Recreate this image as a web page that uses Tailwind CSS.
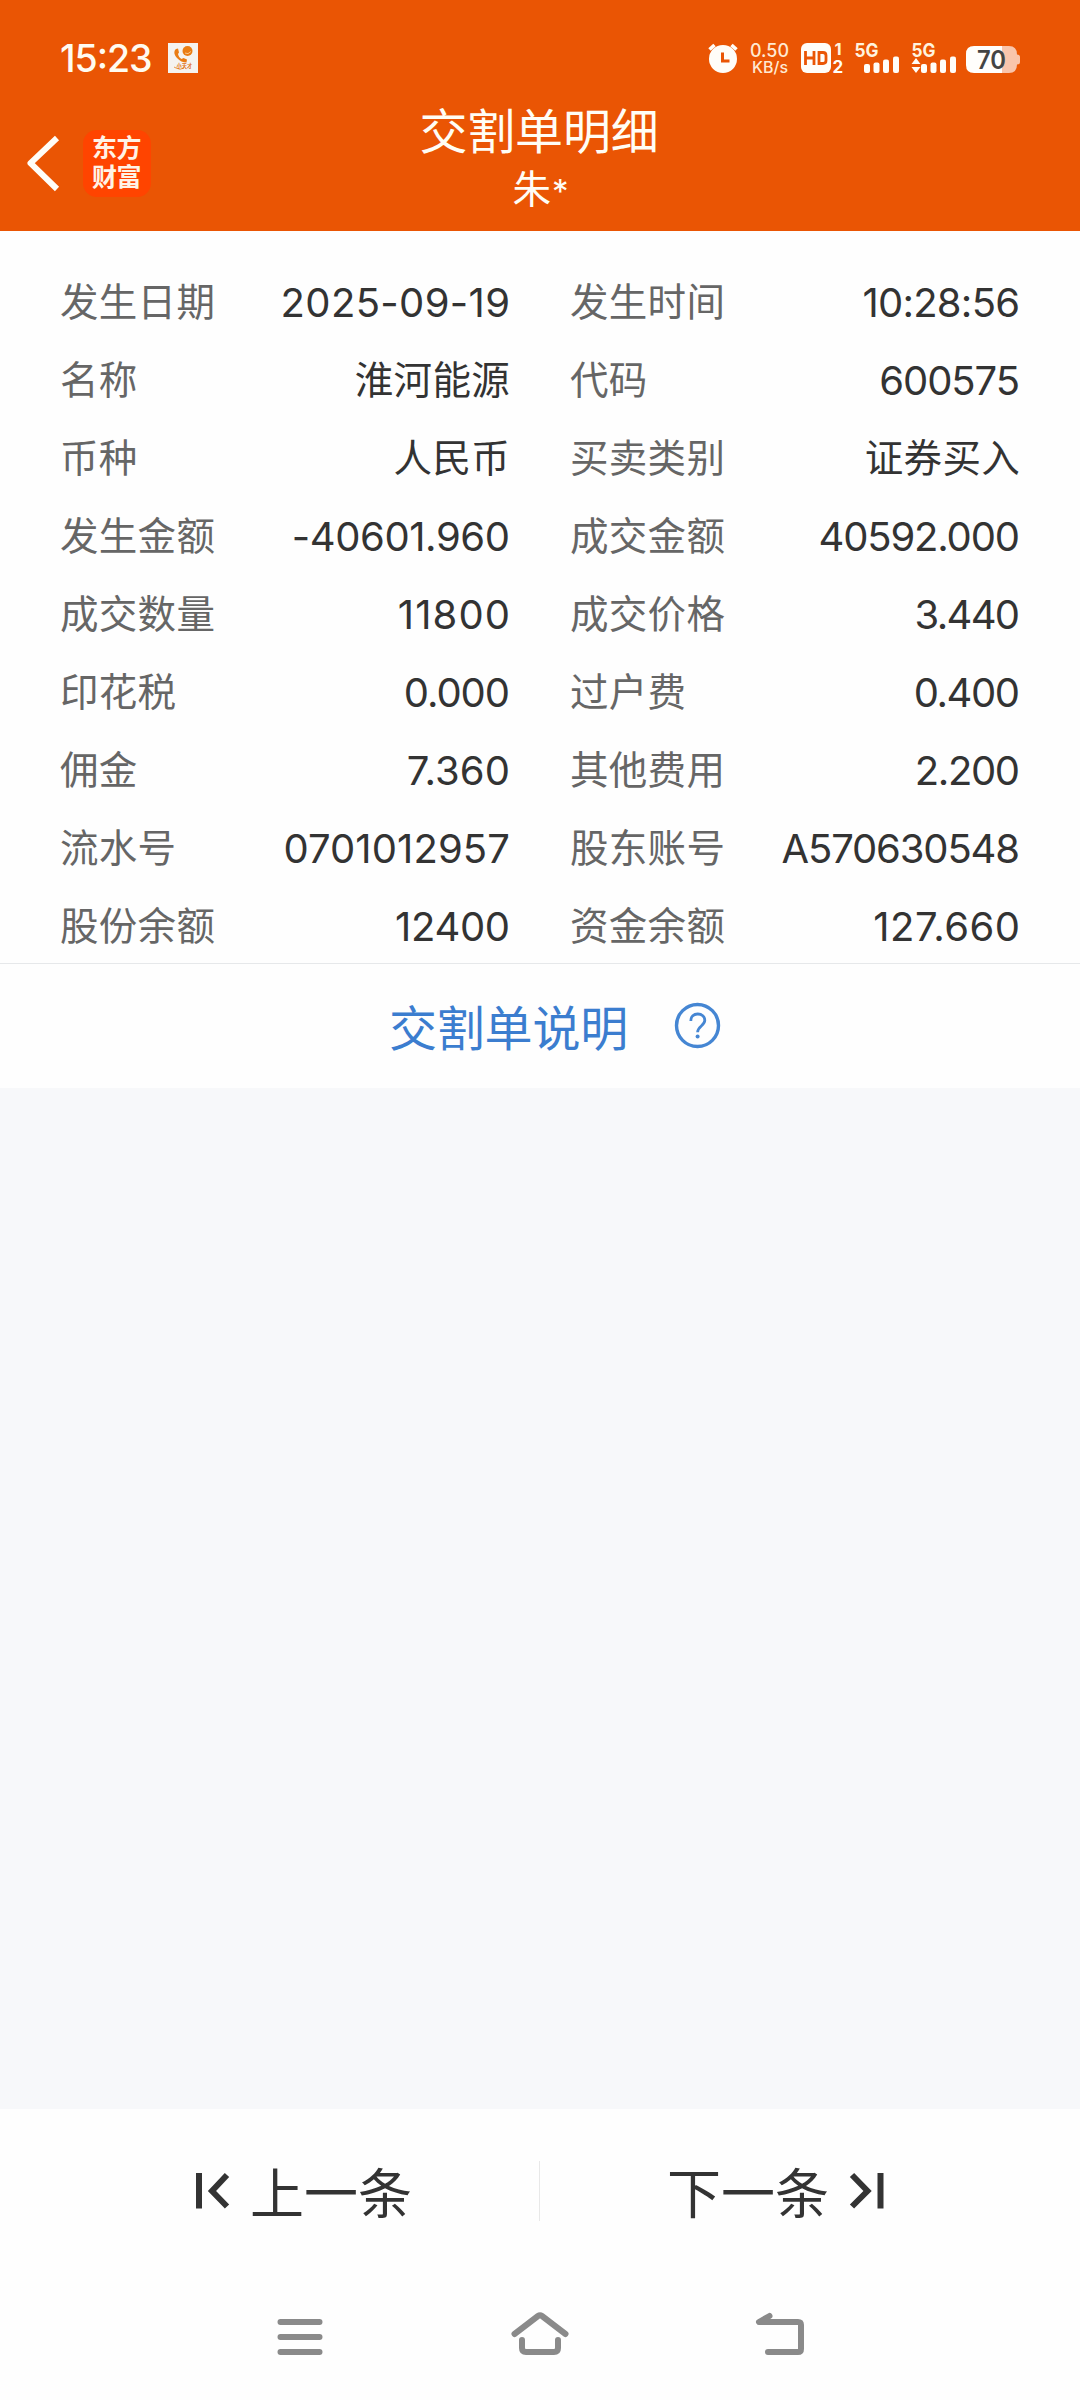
<!DOCTYPE html>
<html lang="zh-CN">
<head>
<meta charset="utf-8">
<title>交割单明细</title>
<script src="https://cdn.jsdelivr.net/npm/@tailwindcss/browser@4"></script>
</head>
<body class="w-[1080px] h-[2400px] bg-[#fefefe] font-['Inter','Noto_Sans_CJK_SC',sans-serif] flex flex-col overflow-hidden">

<header class="h-[231px] shrink-0 bg-[#ea5504] text-[#fffdf5] flex flex-col">
  <!-- status bar -->
  <div class="h-[90px] flex justify-between">
    <svg class="w-[300px] h-[90px]" viewBox="0 0 300 90">
      <text x="60" y="71.500" font-size="37.500" font-weight="450" fill="#fffbf0" textLength="92.500" lengthAdjust="spacing">15:23</text>
      <rect x="168" y="43" width="30" height="30" fill="#f5f3f0"/>
      <path d="M176 49c-2.500 2-2 6 1 9s6 4.500 9.500 4.500l.5-3-3.500-1.500-2 1c-2-1-3-3-3.500-5l1-1.500-1-4z" fill="#ea7d14"/>
      <circle cx="187.500" cy="51" r="5" fill="#ea7d14"/>
      <path d="M185 53q3 2 6-1.500" stroke="#f9c68a" fill="none"/>
      <path d="M174 67l2 1q4 2.500 8 0" stroke="#ea7d14" fill="none" stroke-width=".8"/>
      <text x="176.500" y="68" font-size="5.200" font-weight="700" fill="#e07010">小天才</text>
    </svg>
    <svg class="w-[390px] h-[90px]" viewBox="690 0 390 90">
      <circle cx="723" cy="59" r="14" fill="#fffdf8"/>
      <path d="M709.500 49.500l5-4.500M736.500 49.500l-5-4.500" stroke="#fffdf8" stroke-width="3.600"/>
      <path d="M722.500 52.500v8.500h7" stroke="#ea5504" stroke-width="3" fill="none"/>
      <text x="750" y="57" font-size="18.500" font-weight="500" fill="#ffe9d2" textLength="39" lengthAdjust="spacingAndGlyphs">0.50</text>
      <text x="752" y="72.500" font-size="15.500" font-weight="500" fill="#ffe9d2" textLength="36" lengthAdjust="spacingAndGlyphs">KB/s</text>
      <rect x="801" y="43" width="30" height="30" rx="6" fill="#fffdf8"/>
      <path d="M805.500 51v14M814 51v14M805.500 58h8.500M819 52.500h4q3 0 3 3v5q0 3-3 3h-4z" stroke="#ea5504" stroke-width="2.800" fill="none"/>
      <text x="834.500" y="55" font-size="16.500" font-weight="700" fill="#fff3df">1</text>
      <text x="832.500" y="72.500" font-size="17" font-weight="700" fill="#fffdf8">2</text>
      <text x="854.500" y="57" font-size="19" font-weight="700" fill="#fff3df" textLength="24" lengthAdjust="spacingAndGlyphs">5G</text>
      <g fill="#fffdf8">
        <rect x="864" y="64" width="6" height="9" rx="2"/><rect x="873.500" y="62.500" width="6" height="10.500" rx="2"/><rect x="883" y="59.500" width="6" height="13.500" rx="2"/><rect x="893" y="56.500" width="6" height="16.500" rx="2"/>
        <rect x="921" y="64" width="6" height="9" rx="2"/><rect x="930.500" y="62.500" width="6" height="10.500" rx="2"/><rect x="940" y="59.500" width="6" height="13.500" rx="2"/><rect x="950" y="56.500" width="6" height="16.500" rx="2"/>
        <path d="M916 58l4.500 6h-9zM916 73l4.500-6h-9z"/>
      </g>
      <text x="911.500" y="57" font-size="19" font-weight="700" fill="#fff3df" textLength="24" lengthAdjust="spacingAndGlyphs">5G</text>
      <path d="M1002 46h7q8 0 8 8.500 3 0 3 2.500v5q0 2.500-3 2.500 0 8.500-8 8.500h-7z" fill="#f9c5ac"/>
      <path d="M974 46h28v27h-28q-8 0-8-8v-11q0-8 8-8z" fill="#fffefc"/>
      <text x="977" y="69" font-size="25" font-weight="600" fill="#444" textLength="29" lengthAdjust="spacingAndGlyphs">70</text>
    </svg>
  </div>
  <!-- title bar -->
  <div class="h-[141px] grid grid-cols-[300px_1fr_300px]">
    <div class="flex items-start">
      <svg class="w-[83px] h-[141px]" viewBox="0 90 83 141"><path d="M57 138L30.500 163.200l26.500 25.800" stroke="#fffdf8" stroke-width="6" fill="none" stroke-linejoin="round"/></svg>
      <div class="mt-[40px] w-[68px] h-[67px] rounded-[14px] bg-[#ff4400] flex flex-col items-center justify-center text-[25px] leading-[29px] tracking-[-0.5px] pr-[1px] pb-[2px] font-bold text-[#fff3e6]"><span>东方</span><span>财富</span></div>
    </div>
    <div class="flex flex-col items-center">
      <h1 class="mt-[12px] pr-[2px] text-[48px] leading-[60px] tracking-[-0.2px]">交割单明细</h1>
      <p class="mt-[1px] text-[38.500px] leading-[52px] flex pl-[1px]">朱<span class="text-[33px] pt-[2px] pl-[1px]">*</span></p>
    </div>
  </div>
</header>

<main class="flex-1 flex flex-col bg-[#f7f8fa]">
  <section id="rows" class="h-[733px] bg-[#fefefe] border-b border-[#e6e8ea] pt-[32px] pl-[60px] pr-[60px] grid grid-cols-2 gap-x-[60px] auto-rows-[78px] text-[38.500px] text-[#333]"></section>
  <section class="h-[124px] bg-[#fefefe] flex justify-center items-start">
    <span class="mt-[35px] ml-[30px] text-[48px] leading-[60px] tracking-[-0.2px] text-[#3b7dcf]">交割单说明</span>
    <svg class="ml-[46px] mt-[38px] w-[47px] h-[47px]" viewBox="674 1002 47 47" fill="none" stroke="#4586d3"><circle cx="697.500" cy="1025.500" r="21" stroke-width="3.400"/><path d="M690.800 1021c0-4.500 3-7 7-7s7 2.700 7 6.300c0 5.500-7.200 6-7.200 12" stroke-width="2.800"/><circle cx="697.600" cy="1036.500" r="2" fill="#4586d3" stroke="none"/></svg>
  </section>
</main>

<footer class="h-[291px] shrink-0 bg-[#fefefe]">
  <div class="h-[163px] grid grid-cols-[539px_1px_540px] text-[54px] leading-[68px] text-[#333]">
    <div class="flex items-start pl-[194px]">
      <svg class="mt-[62px] w-[40px] h-[40px]" viewBox="194 2171 40 40" fill="none" stroke="#333"><path d="M199 2173v35.500" stroke-width="6"/><path d="M227 2175l-15 16 15 15.500" stroke-width="6"/></svg>
      <span class="ml-[16px] mt-[52px]">上一条</span>
    </div>
    <div class="mt-[52px] h-[60px] bg-[#e8e8e8]"></div>
    <div class="flex items-start pl-[127px]">
      <span class="mt-[52px]">下一条</span>
      <svg class="ml-[18px] mt-[62px] w-[40px] h-[40px]" viewBox="847 2171 40 40" fill="none" stroke="#333"><path d="M880.500 2173v35.500" stroke-width="6"/><path d="M852 2175l15.500 16-15.500 15.500" stroke-width="6"/></svg>
    </div>
  </div>
  <nav class="h-[128px] flex justify-center gap-[160px] pt-[25px]">
    <svg class="w-[80px] h-[80px]" viewBox="260 2297 80 80" stroke="#8a8a8a" stroke-width="6" stroke-linecap="round"><path d="M280.500 2322h39M280.500 2337h39M280.500 2352h39"/></svg>
    <svg class="w-[80px] h-[80px]" viewBox="500 2297 80 80" fill="none" stroke="#8a8a8a" stroke-width="6" stroke-linecap="round" stroke-linejoin="round"><path d="M514.500 2334l23.500-18q2-1.500 4 0l23.500 18M522 2340v8q0 4 4 4h28q4 0 4-4v-8"/></svg>
    <svg class="w-[80px] h-[80px]" viewBox="740 2297 80 80" fill="none" stroke="#8a8a8a" stroke-width="6" stroke-linecap="round" stroke-linejoin="round"><path d="M769.500 2316l-10.500 6h39q3 0 3 3v24q0 3-3 3h-30"/></svg>
  </nav>
</footer>

<script>
// label, value, tracking classes
const data = [
  ['发生日期', '2025-09-19', 'tracking-[0.35px] mr-[-0.35px]'], ['发生时间', '10:28:56', 'tracking-[-0.75px] mr-[0.75px]'],
  ['名称', '淮河能源', 'tracking-[0.3px]'], ['代码', '600575', 'tracking-[-1.1px] mr-[1.1px]'],
  ['币种', '人民币', 'tracking-[0.3px]'], ['买卖类别', '证券买入', 'tracking-[0.3px]'],
  ['发生金额', '-40601.960', 'tracking-[-0.4px] mr-[0.4px]'], ['成交金额', '40592.000', 'tracking-[-1.16px] mr-[1.16px]'],
  ['成交数量', '11800', 'tracking-[1.1px] mr-[-1.1px]'], ['成交价格', '3.440', 'tracking-[-1.7px] mr-[1.7px]'],
  ['印花税', '0.000', 'tracking-[-1.05px] mr-[1.05px]'], ['过户费', '0.400', 'tracking-[-1.45px] mr-[1.45px]'],
  ['佣金', '7.360', 'tracking-[0.1px]'], ['其他费用', '2.200', 'tracking-[-1.4px] mr-[1.4px]'],
  ['流水号', '0701012957', 'tracking-[0.1px]'], ['股东账号', 'A570630548', 'tracking-[-1.15px] mr-[1.15px]'],
  ['股份余额', '12400', 'tracking-[-0.35px] mr-[0.35px]'], ['资金余额', '127.660', 'tracking-[0.5px] mr-[-0.5px]'],
];
document.getElementById('rows').innerHTML = data.map(([label, value, track]) => {
  const size = /\d/.test(value) ? 'text-[40px] pt-[2px]' : 'text-[38.500px]';
  return `<div class="flex justify-between items-center leading-[56px] whitespace-nowrap"><span class="text-[#666] tracking-[0.3px]">${label}</span><span class="${size} ${track}">${value}</span></div>`;
}).join('');
</script>
</body>
</html>
